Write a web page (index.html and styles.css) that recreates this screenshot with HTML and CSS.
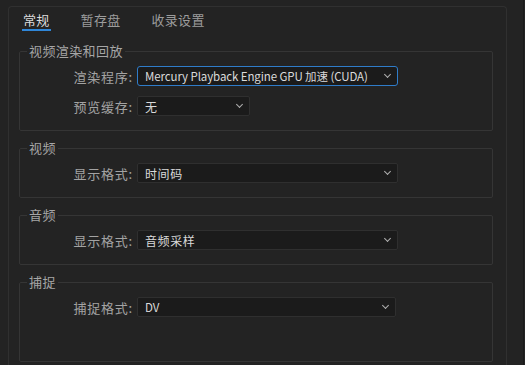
FILE: index.html
```html
<!DOCTYPE html>
<html lang="zh-CN">
<head>
    <meta charset="UTF-8">
    <title>首选项</title>
    <link rel="stylesheet" href="styles.css">
</head>
<body>
<div class="window">
    <div class="panel">
        <ul class="tabs">
            <li class="active">常规</li>
            <li>暂存盘</li>
            <li>收录设置</li>
        </ul>

        <fieldset class="group">
            <legend>视频渲染和回放</legend>
            <div class="row">
                <label>渲染程序:</label>
                <div class="select wide focused"><span class="latin">Mercury Playback Engine GPU 加速 (CUDA)</span><i class="chev"></i></div>
            </div>
            <div class="row">
                <label>预览缓存:</label>
                <div class="select short"><span>无</span><i class="chev"></i></div>
            </div>
        </fieldset>

        <fieldset class="group">
            <legend>视频</legend>
            <div class="row">
                <label>显示格式:</label>
                <div class="select wide"><span>时间码</span><i class="chev"></i></div>
            </div>
        </fieldset>

        <fieldset class="group">
            <legend>音频</legend>
            <div class="row">
                <label>显示格式:</label>
                <div class="select wide"><span>音频采样</span><i class="chev"></i></div>
            </div>
        </fieldset>

        <fieldset class="group last">
            <legend>捕捉</legend>
            <div class="row">
                <label>捕捉格式:</label>
                <div class="select wide2"><span class="latin">DV</span><i class="chev"></i></div>
            </div>
        </fieldset>
    </div>
</div>
</body>
</html>
```

FILE: styles.css
```css
* {
    margin: 0;
    padding: 0;
    box-sizing: border-box;
}

ul {
    list-style: none;
}

html, body {
    height: 100%;
    overflow: hidden;
    background: #232323;
}

body {
    font-family: "Noto Sans CJK SC", "Noto Sans", sans-serif;
    font-size: 13px;
    color: #a6a6a6;
}

.window {
    width: 524px;
    height: 100%;
    border-right: 1px solid #1a1a1a;
    padding: 6px 16px 0 8px;
}

.panel {
    border: 1px solid #303030;
    border-bottom: 0;
    border-radius: 4px 4px 0 0;
    min-height: 400px;
}

.tabs {
    display: flex;
    gap: 29px;
    padding: 4px 0 0 13px;
}

.tabs li {
    padding: 0 1px;
    line-height: 18px;
    border-bottom: 2px solid transparent;
    color: #9c9c9c;
    letter-spacing: 0.3px;
}

.tabs li.active {
    color: #dcdcdc;
    border-bottom-color: #2f86d8;
}

.group {
    border: 1px solid #353535;
    border-radius: 2px;
    margin: 10px 13px 0 10px;
    padding: 8px 0 14px;
    min-width: 0;
}

.tabs + .group {
    margin-top: 13px;
}

.group.last {
    padding-bottom: 44px;
}

.group legend {
    margin-left: 7px;
    padding: 0 2px;
    line-height: 14px;
    color: #a6a6a6;
    letter-spacing: 0.4px;
}

.row {
    display: flex;
    align-items: center;
    height: 20px;
}

.row + .row {
    margin-top: 10px;
}

.row label {
    width: 113px;
    margin-right: 4px;
    text-align: right;
    color: #a3a3a3;
    letter-spacing: 0.8px;
}

.select {
    height: 20px;
    display: flex;
    align-items: center;
    justify-content: space-between;
    padding: 0 7px 0 7px;
    background: #1b1b1b;
    border: 1px solid #2f2f2f;
    border-radius: 2px;
    color: #dadada;
    font-size: 12px;
    letter-spacing: 0.6px;
    white-space: nowrap;
}

.select .latin {
    font-size: 11.5px;
    letter-spacing: -0.1px;
}

.select.wide {
    width: 261px;
}

.select.wide2 {
    width: 259px;
}

.select.short {
    width: 113px;
}

.select.focused {
    border-color: #2f7cc9;
    border-radius: 3px;
}

.chev {
    width: 5px;
    height: 5px;
    border-right: 1px solid #b0b0b0;
    border-bottom: 1px solid #b0b0b0;
    transform: rotate(45deg);
    margin-top: -3px;
}
```
